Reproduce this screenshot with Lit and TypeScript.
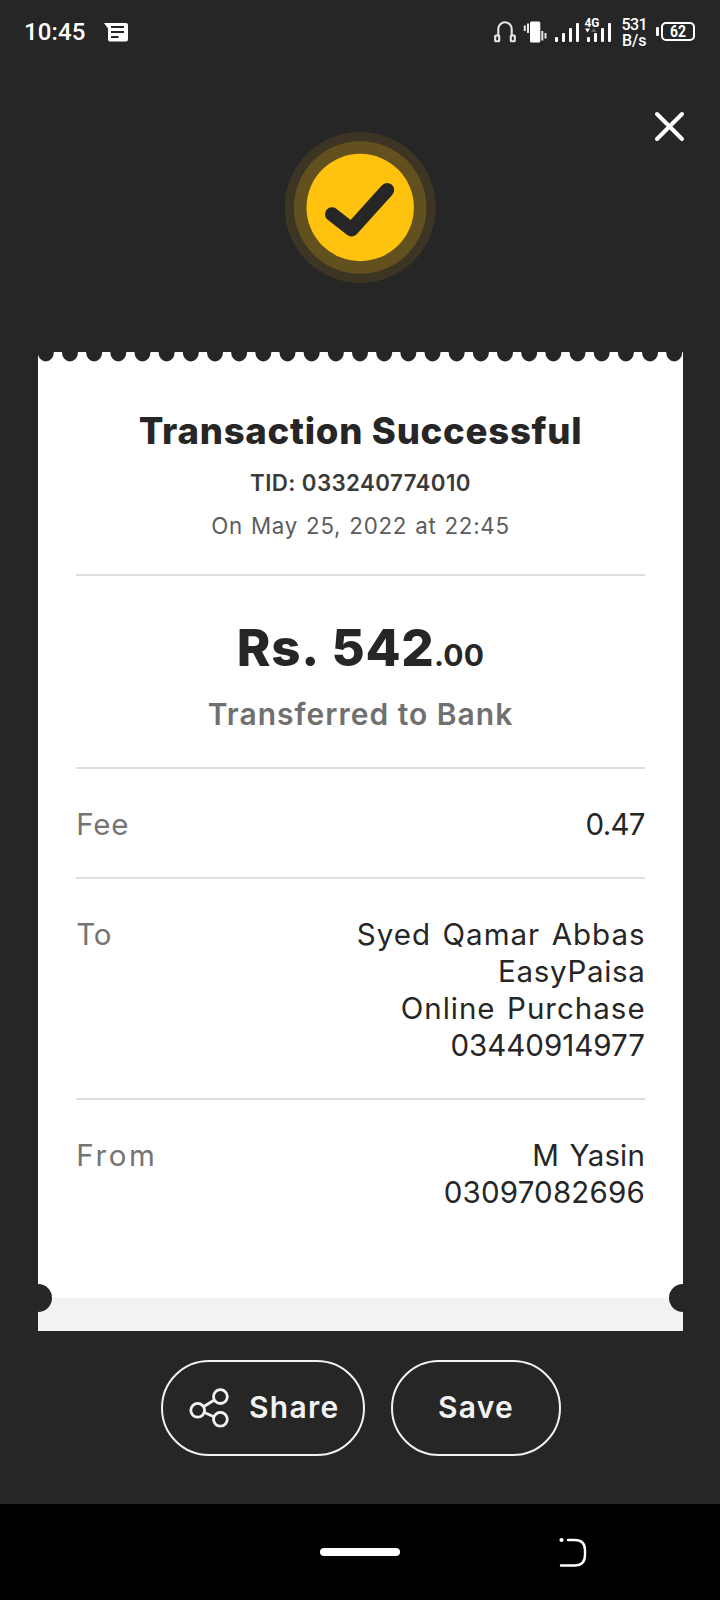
import { LitElement, html, css, svg } from "lit";
import { customElement } from "lit/decorators.js";

@customElement("status-bar")
class StatusBar extends LitElement {
  static styles = css`
    :host { display: flex; height: 64px; color: #fff; font-family: Roboto, sans-serif; }
    .left { display: flex; padding: 18px 0 0 24px; gap: 18px; }
    .time { font-size: 24px; line-height: 29px; font-weight: 500; width: 62px; letter-spacing: 0.15px; }
    .right { margin-left: auto; display: block; }
    .msg { margin-top: 4px; }
    text { fill: #fff; font-family: Roboto, sans-serif; }
    .net { font-size: 13px; font-weight: 700; }
    .speed { font-size: 16px; font-weight: 500; }
    .level { font-size: 16px; font-weight: 700; }
  `;
  render() {
    const bars = (x: number, hs: number[]) =>
      hs.map((h, i) => svg`<rect x=${x + i * 7} y=${42 - h} width="3" height=${h} rx="1" fill="#fff"/>`);
    return html`
      <div class="left">
        <span class="time">10:45</span>
        <svg class="msg" width="24" height="20" viewBox="104 22 24 20">
          <path fill="#fff" d="M104 23H126a2 2 0 0 1 2 2V39.500a2 2 0 0 1-2 2H110a2 2 0 0 1-2-2V28.500Z"/>
          <path stroke="#262626" stroke-width="2" d="M111 27H124M111 32H124M111 37H118.500"/>
        </svg>
      </div>
      <svg class="right" width="240" height="64" viewBox="480 0 240 64">
        <g fill="none" stroke="#e8e8e8" stroke-width="2.100">
          <path d="M498.300 36V29a6.700 6.700 0 0 1 13.400 0V36"/>
          <rect x="495.200" y="35.500" width="4" height="5.700" rx="0.800"/>
          <rect x="510.800" y="35.500" width="4" height="5.700" rx="0.800"/>
        </g>
        <rect x="530" y="21.500" width="10.300" height="21" rx="1.500" fill="#fff"/>
        <path stroke="#e8e8e8" stroke-width="2" d="M524.800 25.500V31M528 23.500V33M542.300 31V40.500M545.500 33V38.500"/>
        ${bars(555, [5, 9, 14, 19])}
        ${bars(587, [5, 9, 14, 19])}
        <rect x="584" y="17" width="16" height="11" fill="#262626"/>
        <text class="net" x="584.500" y="27" textLength="15" lengthAdjust="spacingAndGlyphs">4G</text>
        <path fill="#fff" d="M585 28.500h5l-2.500 4z"/>
        <path fill="#666" d="M591 32h5.500l-2.700-4z"/>
        <text class="speed" x="621.500" y="30" textLength="26">531</text>
        <text class="speed" x="622" y="46" textLength="24.500">B/s</text>
        <rect x="656" y="27" width="3" height="9" rx="1" fill="#fff"/>
        <rect x="662" y="23" width="32" height="17" rx="4" fill="none" stroke="#fff" stroke-width="2"/>
        <text class="level" x="670" y="37" textLength="16" lengthAdjust="spacingAndGlyphs">62</text>
      </svg>`;
  }
}

@customElement("receipt-card")
class ReceiptCard extends LitElement {
  static styles = css`
    :host { display: block; width: 645px; color: #262626; position: relative; }
    .edge { display: block; }
    .body { background: #fff; height: 934px; box-sizing: border-box; padding: 45px 38px 0; }
    .head, .sum { text-align: center; border-bottom: 2px solid #dedede; white-space: nowrap; display: flex; flex-direction: column; align-items: center; }
    .head { height: 165px; }
    .title { font-size: 36.5px; line-height: 44px; font-weight: 800; letter-spacing: 0.75px; }
    .tid { font-size: 22.3px; line-height: 30px; font-weight: 600; color: #3a3a3a; margin-top: 15px; letter-spacing: 0.4px; }
    .date { font-size: 22.3px; line-height: 30px; color: #5c5c5c; margin-top: 13px; letter-spacing: 0.75px; word-spacing: 1px; }
    .sum { height: 191px; }
    .amount { font-size: 51px; line-height: 60px; height: 60px; font-weight: 800; margin-top: 42px; letter-spacing: 0.7px; word-spacing: 2px; }
    .cents { font-size: 30px; font-weight: 700; letter-spacing: 0.2px; margin-left: -0.5px; line-height: 1; }
    .kind { font-size: 30px; line-height: 36px; font-weight: 600; color: #707070; margin-top: 18px; letter-spacing: 1px; }
    .row { display: flex; justify-content: space-between; padding: 37px 0 34px; font-size: 29.5px; line-height: 37px; border-bottom: 2px solid #dedede; }
    .row:last-child { border: 0; }
    .label { color: #747474; padding-left: 0.3px; letter-spacing: 0.7px; }
    .wide { letter-spacing: 2.6px; }
    .values { text-align: right; display: flex; flex-direction: column; align-items: flex-end; }
    .name { letter-spacing: 1px; word-spacing: 2.2px; margin-right: -0.6px; }
    .single { letter-spacing: 0.7px; }
    .short { letter-spacing: 0.15px; margin-right: 0; }
    .digits { letter-spacing: 0.2px; }
    .narrow { letter-spacing: 0; }
    .fee { letter-spacing: -0.7px; margin-right: 0.2px; }
    .stub { background: #f2f2f2; height: 33px; }
    .notches { position: absolute; left: 0; bottom: 19px; display: block; }
  `;
  rows: [string, string, [string, string][]][] = [
    ["Fee", "label", [["0.47", "fee"]]],
    ["To", "label", [["Syed Qamar Abbas", "name"], ["EasyPaisa", "name single"], ["Online Purchase", "name"], ["03440914977", "narrow"]]],
    ["From", "label wide", [["M Yasin", "name short"], ["03097082696", "digits"]]],
  ];
  render() {
    return html`
      <svg class="edge" width="645" height="12">
        <rect width="645" height="12" fill="#fff"/>
        ${Array.from({ length: 27 }, (_, i) =>
          svg`<ellipse cx=${7.8 + i * 24.17} cy="0.500" rx="8" ry="9" fill="#262626"/>`)}
      </svg>
      <div class="body">
        <div class="head">
          <div class="title">Transaction Successful</div>
          <div class="tid">TID: 033240774010</div>
          <div class="date">On May 25, 2022 at 22:45</div>
        </div>
        <div class="sum">
          <div class="amount">Rs. 542<span class="cents">.00</span></div>
          <div class="kind">Transferred to Bank</div>
        </div>
        ${this.rows.map(([label, cls, values]) => html`
          <div class="row">
            <span class=${cls}>${label}</span>
            <div class="values">${values.map(([v, c]) => html`<span class=${c}>${v}</span>`)}</div>
          </div>`)}
      </div>
      <div class="stub"></div>
      <svg class="notches" width="645" height="28">
        <circle cx="0" cy="14" r="14" fill="#262626"/>
        <circle cx="645" cy="14" r="14" fill="#262626"/>
      </svg>`;
  }
}

@customElement("app-root")
class AppRoot extends LitElement {
  static styles = css`
    :host { display: flex; flex-direction: column; width: 720px; height: 1600px; background: #262626; font-family: Inter, sans-serif; overflow: hidden; }
    .hero { height: 288px; display: grid; grid-template-columns: 1fr 152px 1fr; }
    .badge { grid-column: 2; margin-top: 67px; }
    .close { justify-self: end; margin: 46px 34px 0 0; }
    receipt-card { margin-left: 38px; flex: none; }
    .actions { display: flex; gap: 26px; margin: 29px 0 0 161px; }
    .btn { box-sizing: border-box; height: 96px; border: 2px solid #f2f2f2; border-radius: 48px; background: none; color: #f2f2f2; font: 600 30px/36px Inter, sans-serif; letter-spacing: 1.3px; display: flex; align-items: center; padding: 0 0 2px; }
    .share { width: 204px; padding-left: 26px; gap: 20px; }
    .share svg { margin-top: 2px; }
    .save { width: 170px; justify-content: center; }
    .nav { margin-top: 48px; height: 96px; background: #000; display: grid; grid-template-columns: 1fr 80px 1fr; align-items: center; }
    .pill { grid-column: 2; height: 8px; border-radius: 4px; background: #fff; }
    .back { margin-left: 158px; margin-bottom: 1px; }
  `;
  render() {
    return html`
      <status-bar></status-bar>
      <div class="hero">
        <svg class="badge" width="152" height="152" viewBox="0 0 152 152">
          <circle cx="76.200" cy="76.500" r="75.500" fill="#3c3524"/>
          <circle cx="76.200" cy="76.500" r="66.300" fill="#63501f"/>
          <circle cx="76.200" cy="76.500" r="53.700" fill="#ffc20e"/>
          <path d="M48 83.300L67.500 98.500L103.200 59" fill="none" stroke="#262626" stroke-width="14" stroke-linecap="round" stroke-linejoin="round"/>
        </svg>
        <svg class="close" width="32" height="32" viewBox="0 0 32 32">
          <path d="M3 4L28 29M28 4L3 29" stroke="#fff" stroke-width="4" stroke-linecap="round"/>
        </svg>
      </div>
      <receipt-card></receipt-card>
      <div class="actions">
        <button class="btn share">
          <svg width="40" height="40" viewBox="0 0 40 40" fill="none" stroke="#f2f2f2" stroke-width="2.800">
            <circle cx="8.700" cy="22.300" r="6.900"/>
            <circle cx="31.400" cy="8.600" r="6.900"/>
            <circle cx="31.400" cy="31.300" r="6.900"/>
            <path d="M14.800 18.500L25.400 12M15.200 24.500L25 28.800"/>
          </svg>
          <span>Share</span>
        </button>
        <button class="btn save">Save</button>
      </div>
      <div class="nav">
        <div class="pill"></div>
        <svg class="back" width="30" height="32" viewBox="558 1536 30 32">
          <circle cx="561.500" cy="1540" r="2.100" fill="#fff"/>
          <path d="M568 1540H574.500Q585 1540 585 1550V1555Q585 1565.500 574.500 1565.500H561" fill="none" stroke="#fff" stroke-width="2.400" stroke-linecap="round"/>
        </svg>
      </div>`;
  }
}
